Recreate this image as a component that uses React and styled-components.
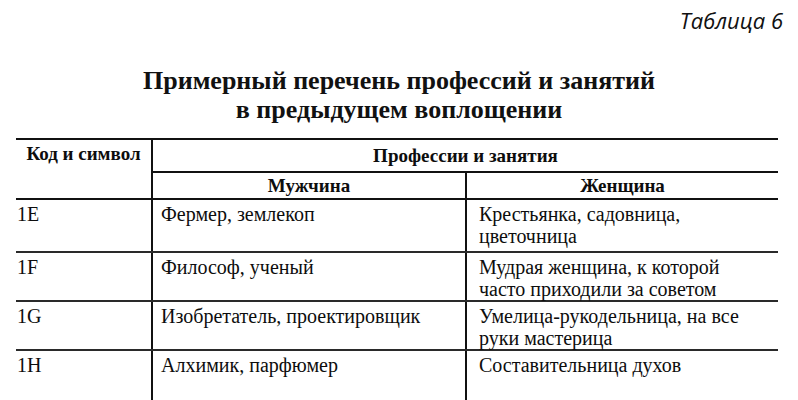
import styled, { createGlobalStyle } from 'styled-components';

const Global = createGlobalStyle`
  html, body { margin: 0; padding: 0; background: #fff; }
  body { font-family: "Liberation Serif", "Times New Roman", serif; color: #111; }
`;

const rows = [
  { code: '1E', man: 'Фермер, землекоп', woman: 'Крестьянка, садовница, цветочница', h: 53 },
  { code: '1F', man: 'Философ, ученый', woman: 'Мудрая женщина, к которой часто приходили за советом', h: 47 },
  { code: '1G', man: 'Изобретатель, проектировщик', woman: 'Умелица-рукодельница, на все руки мастерица', h: 47 },
  { code: '1H', man: 'Алхимик, парфюмер', woman: 'Составительница духов', h: 60 },
];

const Page = styled.div`
  width: 798px;
  height: 400px;
  overflow: hidden;
  padding-top: 6px;
  box-sizing: border-box;
`;

const Caption = styled.div`
  font-family: "Open Sans", "Noto Sans", sans-serif;
  font-style: italic;
  font-size: 22px;
  line-height: 28px;
  text-align: right;
  padding-right: 15px;
  color: #111;
`;

const Heading = styled.h1`
  margin: 32px 0 0;
  font-family: "Liberation Serif", "Times New Roman", serif;
  font-size: 26px;
  line-height: 29px;
  font-weight: bold;
  text-align: center;
  color: #111;
`;

const Table = styled.table`
  margin: 14px 0 0 16px;
  width: 762px;
  border-collapse: collapse;
  table-layout: fixed;
  font-family: "Liberation Serif", "Times New Roman", serif;
  color: #0d0d0d;
`;

const HeadCell = styled.th`
  font-family: "Liberation Serif", "Times New Roman", serif;
  font-size: 19px;
  font-weight: bold;
  text-align: center;
  vertical-align: ${p => (p.$top ? 'top' : 'middle')};
  padding: ${p => (p.$top ? '3px 0 0' : '0')};
  height: ${p => p.$h}px;
  border-top: 2px solid #111;
  border-left: ${p => (p.$divide ? '2px solid #111' : 'none')};
  border-bottom: 2px solid #111;
  box-sizing: border-box;
`;

const Cell = styled.td`
  font-family: "Liberation Serif", "Times New Roman", serif;
  font-size: 20px;
  vertical-align: top;
  padding: 3px 22px 0 ${p => p.$pl}px;
  line-height: 22px;
  height: ${p => p.$h}px;
  box-sizing: border-box;
  border-left: ${p => (p.$divide ? '2px solid #111' : 'none')};
  border-bottom: ${p => (p.$last ? 'none' : '2px solid #2a2a2a')};
`;

export default function App() {
  return (
    <Page>
      <Global />
      <Caption>Таблица 6</Caption>
      <Heading>
        Примерный перечень профессий и занятий
        <br />в предыдущем воплощении
      </Heading>
      <Table>
        <colgroup>
          <col style={{ width: 136 }} />
          <col style={{ width: 314 }} />
          <col style={{ width: 312 }} />
        </colgroup>
        <thead>
          <tr>
            <HeadCell rowSpan={2} $top $h={60}>Код и символ</HeadCell>
            <HeadCell colSpan={2} $divide $h={33}>Профессии и занятия</HeadCell>
          </tr>
          <tr>
            <HeadCell $divide $h={27}>Мужчина</HeadCell>
            <HeadCell $divide $h={27}>Женщина</HeadCell>
          </tr>
        </thead>
        <tbody>
          {rows.map((r, i) => (
            <tr key={r.code}>
              <Cell $pl={1} $h={r.h} $last={i === rows.length - 1}>{r.code}</Cell>
              <Cell $pl={8} $h={r.h} $divide $last={i === rows.length - 1}>{r.man}</Cell>
              <Cell $pl={12} $h={r.h} $divide $last={i === rows.length - 1}>{r.woman}</Cell>
            </tr>
          ))}
        </tbody>
      </Table>
    </Page>
  );
}
